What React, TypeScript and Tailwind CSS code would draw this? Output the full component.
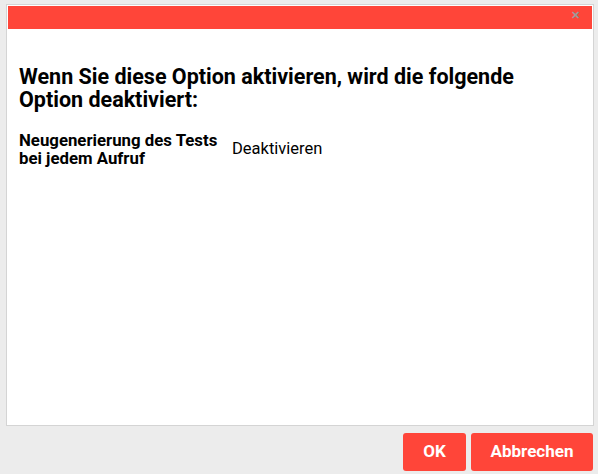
export default function App() {
  return (
    <div className="h-[474px] w-[598px] bg-[#ececec] pt-[4px] pl-[6px] pr-[4px] font-['Roboto',sans-serif]">
      {/* Dialog */}
      <div className="h-[422px] border border-[#d4d4d4] bg-white p-px flex flex-col">
        <div className="h-[23px] bg-[#ff4539] flex items-start justify-end pr-[12px] pt-[4px]">
          <span className="text-[#9a9a9a] text-[11px] font-bold leading-none">✕</span>
        </div>
        <div className="pl-[11px] pr-4 pt-[36px]">
          <h2 className="w-[540px] text-[21.5px] leading-[23px] font-bold text-black">
            Wenn Sie diese Option aktivieren, wird die folgende Option deaktiviert:
          </h2>
          <div className="flex items-center mt-[20px]">
            <div className="w-[213px] pr-2 text-[16.8px] leading-[18px] font-bold text-black">
              Neugenerierung des Tests bei jedem Aufruf
            </div>
            <div className="text-[16.5px] text-black">Deaktivieren</div>
          </div>
        </div>
      </div>
      {/* Buttons */}
      <div className="flex justify-end gap-[5px] mt-[7px] pr-px">
        <button className="w-[63px] h-[38px] rounded-[3px] bg-[#ff4539] text-white font-bold text-[17px]">OK</button>
        <button className="w-[122px] h-[38px] rounded-[3px] bg-[#ff4539] text-white font-bold text-[17px]">Abbrechen</button>
      </div>
    </div>
  )
}
